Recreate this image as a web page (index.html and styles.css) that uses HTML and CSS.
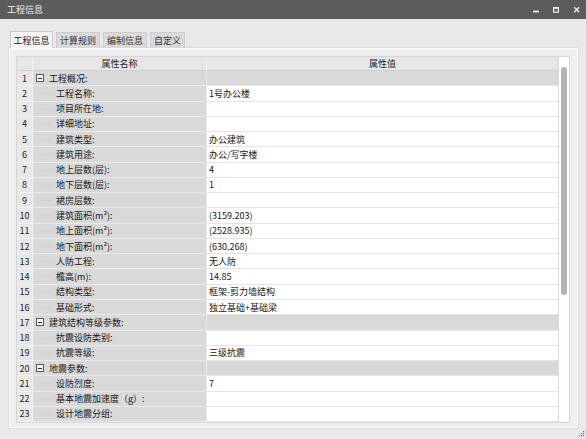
FILE: index.html
```html
<!DOCTYPE html>
<html lang="zh">
<head>
<meta charset="utf-8">
<title>工程信息</title>
<link rel="stylesheet" href="styles.css">
</head>
<body>
<div class="window">
  <div class="titlebar">
    <span class="title">工程信息</span>
    <svg class="controls" width="52" height="19" viewBox="0 0 52 19">
      <rect x="2" y="10.6" width="6" height="1.8" fill="#ececec"/>
      <rect x="22.6" y="7.6" width="4.8" height="4.6" fill="none" stroke="#ececec" stroke-width="1.2"/>
      <rect x="22" y="7" width="6" height="1.8" fill="#ececec"/>
      <path d="M43.2 7.3 L48.2 12.3 M48.2 7.3 L43.2 12.3" stroke="#ececec" stroke-width="1.4"/>
    </svg>
  </div>
  <div class="main">
    <div class="tabs">
      <div class="tab active">工程信息</div>
      <div class="tab">计算规则</div>
      <div class="tab">编制信息</div>
      <div class="tab short">自定义</div>
    </div>
    <div class="panel">
      <div class="table-wrap">
        <div class="grid">
          <div class="row head">
            <div class="c num"></div>
            <div class="c name">属性名称</div>
            <div class="c val">属性值</div>
          </div>
          <div class="row group"><div class="c num">1</div><div class="c name"><span class="toggle"></span>工程概况:</div><div class="c val"></div></div>
          <div class="row"><div class="c num">2</div><div class="c name child">工程名称:</div><div class="c val">1号办公楼</div></div>
          <div class="row"><div class="c num">3</div><div class="c name child">项目所在地:</div><div class="c val"></div></div>
          <div class="row"><div class="c num">4</div><div class="c name child">详细地址:</div><div class="c val"></div></div>
          <div class="row"><div class="c num">5</div><div class="c name child">建筑类型:</div><div class="c val">办公建筑</div></div>
          <div class="row"><div class="c num">6</div><div class="c name child">建筑用途:</div><div class="c val">办公/写字楼</div></div>
          <div class="row"><div class="c num">7</div><div class="c name child">地上层数(层):</div><div class="c val">4</div></div>
          <div class="row"><div class="c num">8</div><div class="c name child">地下层数(层):</div><div class="c val">1</div></div>
          <div class="row"><div class="c num">9</div><div class="c name child">裙房层数:</div><div class="c val"></div></div>
          <div class="row"><div class="c num">10</div><div class="c name child">建筑面积(m²):</div><div class="c val">(3159.203)</div></div>
          <div class="row"><div class="c num">11</div><div class="c name child">地上面积(m²):</div><div class="c val">(2528.935)</div></div>
          <div class="row"><div class="c num">12</div><div class="c name child">地下面积(m²):</div><div class="c val">(630.268)</div></div>
          <div class="row"><div class="c num">13</div><div class="c name child">人防工程:</div><div class="c val">无人防</div></div>
          <div class="row"><div class="c num">14</div><div class="c name child">檐高(m):</div><div class="c val">14.85</div></div>
          <div class="row"><div class="c num">15</div><div class="c name child">结构类型:</div><div class="c val">框架-剪力墙结构</div></div>
          <div class="row"><div class="c num">16</div><div class="c name child">基础形式:</div><div class="c val">独立基础+基础梁</div></div>
          <div class="row group"><div class="c num">17</div><div class="c name"><span class="toggle"></span>建筑结构等级参数:</div><div class="c val"></div></div>
          <div class="row"><div class="c num">18</div><div class="c name child">抗震设防类别:</div><div class="c val"></div></div>
          <div class="row"><div class="c num">19</div><div class="c name child">抗震等级:</div><div class="c val">三级抗震</div></div>
          <div class="row group"><div class="c num">20</div><div class="c name"><span class="toggle"></span>地震参数:</div><div class="c val"></div></div>
          <div class="row"><div class="c num">21</div><div class="c name child">设防烈度:</div><div class="c val">7</div></div>
          <div class="row"><div class="c num">22</div><div class="c name child">基本地震加速度（g）:</div><div class="c val"></div></div>
          <div class="row"><div class="c num">23</div><div class="c name child">设计地震分组:</div><div class="c val"></div></div>
        </div>
        <div class="scrollbar"><div class="thumb"></div></div>
      </div>
    </div>
  </div>
  <div class="footer">
    <svg width="7" height="7" viewBox="0 0 7 7">
      <rect x="5" y="1" width="1.2" height="1.2" fill="#777"/>
      <rect x="3" y="3" width="1.2" height="1.2" fill="#777"/>
      <rect x="5" y="3" width="1.2" height="1.2" fill="#777"/>
      <rect x="1" y="5" width="1.2" height="1.2" fill="#777"/>
      <rect x="3" y="5" width="1.2" height="1.2" fill="#777"/>
      <rect x="5" y="5" width="1.2" height="1.2" fill="#777"/>
    </svg>
  </div>
</div>
</body>
</html>
```
FILE: styles.css
```css
html, body {
  margin: 0;
  padding: 0;
}
body {
  width: 587px;
  height: 439px;
  overflow: hidden;
  background: #e9e9e9;
  font-family: "Noto Sans CJK SC", "Noto Sans", sans-serif;
  font-size: 9px;
  color: #161616;
}
.window {
  display: flex;
  flex-direction: column;
  height: 439px;
  box-sizing: border-box;
  border-right: 1px solid #d2d2d2;
}
.titlebar {
  height: 19px;
  flex: none;
  background: #5c5c5c;
  color: #efefef;
  display: flex;
  align-items: center;
  justify-content: space-between;
  padding: 0 3px 0 7px;
}
.title {
  font-size: 9px;
  line-height: 19px;
}
.controls {
  display: block;
}
.main {
  padding: 12px 0 0 9px;
  flex: none;
}
.tabs {
  display: flex;
  align-items: flex-end;
  gap: 3px;
  height: 17px;
  padding-left: 1px;
}
.tab {
  box-sizing: border-box;
  width: 44px;
  height: 16px;
  background: #dadada;
  border: 1px solid #cdcdcd;
  border-bottom: none;
  display: flex;
  align-items: center;
  justify-content: center;
  color: #333;
}
.tab.short {
  width: 35px;
}
.tab.active {
  width: 43px;
  height: 17px;
  background: #f4f4f4;
  border-color: #c9c9c9;
  color: #222;
}
.panel {
  box-sizing: border-box;
  width: 569px;
  height: 380px;
  background: #f0f0f0;
  border: 1px solid #fbfbfb;
  box-shadow: 0 0 0 1px #dcdcdc;
  padding: 7px 7px 0 6px;
}
.table-wrap {
  display: flex;
  height: 367px;
  box-sizing: border-box;
  border: 1px solid #d6d6d6;
  background: #fff;
}
.grid {
  flex: 1;
  display: flex;
  flex-direction: column;
}
.row {
  display: grid;
  grid-template-columns: 16px 174px 1fr;
  height: 15.3px;
}
.row.head {
  height: 14px;
}
.c {
  box-sizing: border-box;
  border-right: 1px solid #e4e4e4;
  border-bottom: 1px solid #e4e4e4;
  display: flex;
  align-items: center;
  white-space: nowrap;
  position: relative;
}
.c.num {
  background: #e8e8e8;
  justify-content: center;
  color: #222;
  border-color: #f2f2f2;
}
.c.name {
  background: #d9d9d9;
  padding-left: 3px;
  border-color: #e9e9e9;
}
.c.name.child {
  padding-left: 23px;
}
.c.name.child::before {
  content: "";
  position: absolute;
  left: 7px;
  top: 7px;
  width: 13px;
  height: 1px;
  background: #d1d1d1;
}
.c.val {
  background: #fff;
  padding-left: 2px;
  border-right: none;
}
.row.group .c.val {
  background: #d9d9d9;
  border-color: #e9e9e9;
}
.row.head .c {
  background: #e6e6e6;
  border-bottom: 1px solid #cfcfcf;
  border-right: 1px solid #f4f4f4;
  justify-content: center;
  padding: 0;
  color: #2a2a2a;
}
.row.head .c.val {
  border-right: none;
}
.toggle {
  box-sizing: border-box;
  width: 8px;
  height: 8px;
  border: 1px solid #5a5a5a;
  background: #f2f2f2;
  margin-right: 5px;
  position: relative;
  flex: none;
}
.toggle::after {
  content: "";
  position: absolute;
  left: 1px;
  top: 2.5px;
  width: 4px;
  height: 1px;
  background: #333;
}
.scrollbar {
  width: 10px;
  flex: none;
  border-left: 1px solid #dadada;
  background: #fff;
  display: flex;
  justify-content: center;
}
.thumb {
  width: 6px;
  height: 228px;
  margin-top: 10px;
  border-radius: 3px;
  background: #b3b3b3;
}
.footer {
  flex: 1;
  display: flex;
  justify-content: flex-end;
  align-items: flex-end;
  padding: 0 1px 2px 0;
}
.footer svg {
  display: block;
}
```
